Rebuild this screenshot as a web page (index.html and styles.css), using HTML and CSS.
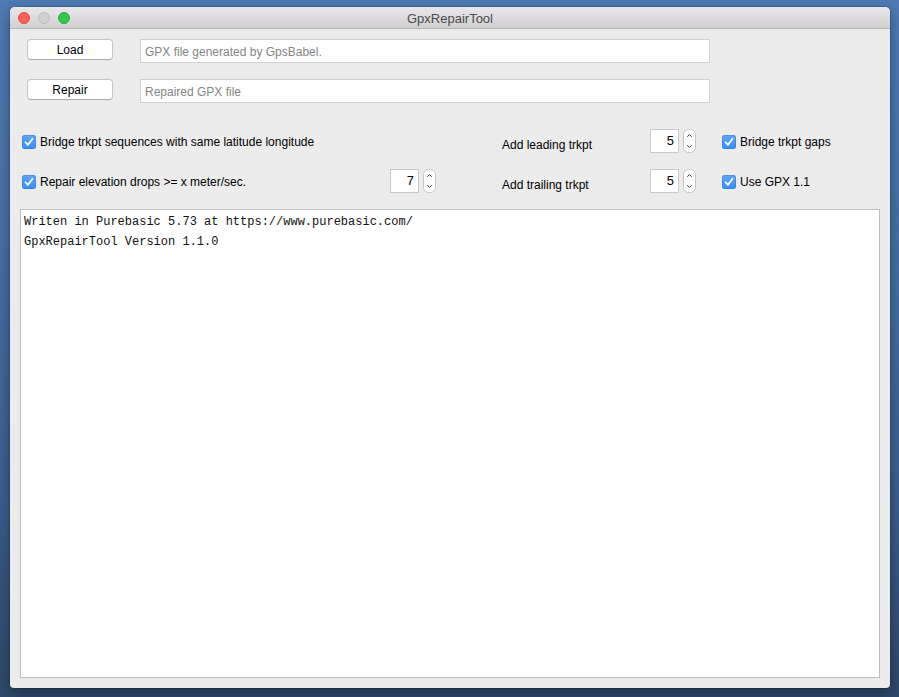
FILE: index.html
```html
<!DOCTYPE html>
<html>
<head>
<meta charset="utf-8">
<title>GpxRepairTool</title>
<link rel="stylesheet" href="styles.css">
</head>
<body>
<div class="window">
  <div class="titlebar">
    <div class="lights">
      <span class="light red"></span>
      <span class="light gray"></span>
      <span class="light green"></span>
    </div>
    <div class="title">GpxRepairTool</div>
    <div></div>
  </div>
  <div class="content">
    <div class="filerow">
      <button class="btn">Load</button>
      <div class="field">GPX file generated by GpsBabel.</div>
    </div>
    <div class="filerow second">
      <button class="btn">Repair</button>
      <div class="field">Repaired GPX file</div>
    </div>

    <div class="opts">
      <label class="check"><span class="box"><svg viewBox="0 0 14 14" width="14" height="14"><path d="M3.6 7.3 L6 9.8 L10.5 3.8" fill="none" stroke="#fff" stroke-width="1.7" stroke-linecap="round" stroke-linejoin="round"/></svg></span>Bridge trkpt sequences with same latitude longitude</label>
      <div></div>
      <div></div>
      <div class="lbl">Add leading trkpt</div>
      <div class="spin"><div class="num">5</div><svg class="step" viewBox="0 0 13 24" width="13" height="24"><rect x="0.5" y="0.5" width="12" height="23" rx="5" fill="#fff" stroke="#c4c4c4"/><path d="M4.3 7.8 L6.5 5.6 L8.7 7.8 M4.3 16.2 L6.5 18.4 L8.7 16.2" fill="none" stroke="#3a3a3a" stroke-width="1"/></svg></div>
      <div></div>
      <label class="check"><span class="box"><svg viewBox="0 0 14 14" width="14" height="14"><path d="M3.6 7.3 L6 9.8 L10.5 3.8" fill="none" stroke="#fff" stroke-width="1.7" stroke-linecap="round" stroke-linejoin="round"/></svg></span>Bridge trkpt gaps</label>
    </div>

    <div class="opts second">
      <label class="check"><span class="box"><svg viewBox="0 0 14 14" width="14" height="14"><path d="M3.6 7.3 L6 9.8 L10.5 3.8" fill="none" stroke="#fff" stroke-width="1.7" stroke-linecap="round" stroke-linejoin="round"/></svg></span>Repair elevation drops &gt;= x meter/sec.</label>
      <div class="spin"><div class="num">7</div><svg class="step" viewBox="0 0 13 24" width="13" height="24"><rect x="0.5" y="0.5" width="12" height="23" rx="5" fill="#fff" stroke="#c4c4c4"/><path d="M4.3 7.8 L6.5 5.6 L8.7 7.8 M4.3 16.2 L6.5 18.4 L8.7 16.2" fill="none" stroke="#3a3a3a" stroke-width="1"/></svg></div>
      <div></div>
      <div class="lbl">Add trailing trkpt</div>
      <div class="spin"><div class="num">5</div><svg class="step" viewBox="0 0 13 24" width="13" height="24"><rect x="0.5" y="0.5" width="12" height="23" rx="5" fill="#fff" stroke="#c4c4c4"/><path d="M4.3 7.8 L6.5 5.6 L8.7 7.8 M4.3 16.2 L6.5 18.4 L8.7 16.2" fill="none" stroke="#3a3a3a" stroke-width="1"/></svg></div>
      <div></div>
      <label class="check"><span class="box"><svg viewBox="0 0 14 14" width="14" height="14"><path d="M3.6 7.3 L6 9.8 L10.5 3.8" fill="none" stroke="#fff" stroke-width="1.7" stroke-linecap="round" stroke-linejoin="round"/></svg></span>Use GPX 1.1</label>
    </div>

    <div class="log">
      <div class="line">Writen in Purebasic 5.73 at https://www.purebasic.com/</div>
      <div class="line">GpxRepairTool Version 1.1.0</div>
    </div>
  </div>
</div>
</body>
</html>
```

FILE: styles.css
```css
html, body {
  margin: 0;
  padding: 0;
}
body {
  width: 899px;
  height: 697px;
  overflow: hidden;
  box-sizing: border-box;
  padding: 7px 0 0 10px;
  background: linear-gradient(180deg, #4e7bb5 0%, #4670a6 35%, #3b5f8f 70%, #2d4869 100%);
  font-family: "Liberation Sans", Arial, Helvetica, sans-serif;
  font-size: 12px;
  color: #000;
}
.window {
  width: 880px;
  height: 681px;
  background: #ececec;
  border-radius: 5px 5px 4px 4px;
  box-shadow: 0 0 0 1px rgba(0,0,0,0.12), 0 4px 14px rgba(0,0,0,0.35);
  display: flex;
  flex-direction: column;
  overflow: hidden;
}
.titlebar {
  height: 21px;
  flex: none;
  border-bottom: 1px solid #b3b3b3;
  background: linear-gradient(180deg, #e9e7e9 0%, #d2d0d2 100%);
  display: grid;
  grid-template-columns: 1fr auto 1fr;
  align-items: center;
}
.lights {
  display: flex;
  gap: 8px;
  padding-left: 8px;
  padding-top: 1px;
}
.light {
  width: 12px;
  height: 12px;
  border-radius: 50%;
  box-sizing: border-box;
}
.red { background: #fc5f57; border: 1px solid #e14640; }
.gray { background: #d0d0d0; border: 1px solid #bdbdbd; }
.green { background: #33c748; border: 1px solid #27a83a; }
.title {
  font-size: 13px;
  color: #4a4a4a;
  padding-top: 1px;
}
.content {
  flex: 1;
  display: flex;
  flex-direction: column;
  padding: 10px 10px 10px 10px;
  min-height: 0;
}
.filerow {
  display: flex;
  align-items: flex-start;
  height: 24px;
  padding-left: 7px;
}
.filerow.second {
  margin-top: 16px;
}
.btn {
  width: 86px;
  height: 21px;
  margin: 0;
  padding: 0;
  background: #fff;
  border: 1px solid #c6c6c6;
  border-bottom-color: #adadad;
  border-radius: 4px;
  font-family: "Liberation Sans", Arial, sans-serif;
  font-size: 12px;
  color: #000;
  box-shadow: 0 0.5px 0 rgba(0,0,0,0.05);
}
.field {
  margin-left: 27px;
  width: 570px;
  height: 24px;
  box-sizing: border-box;
  background: #fff;
  border: 1px solid #d1d1d1;
  color: #858585;
  padding: 1px 4px 0;
  line-height: 22px;
  font-size: 12px;
}
.opts {
  display: grid;
  grid-template-columns: 368px 46px 66px 148px 46px 26px auto;
  height: 24px;
  margin-top: 26px;
  padding-left: 2px;
  align-items: center;
}
.opts.second {
  margin-top: 16px;
}
.check {
  display: flex;
  align-items: center;
  gap: 4px;
  white-space: nowrap;
  padding-top: 2px;
}
.box {
  width: 14px;
  height: 14px;
  border-radius: 3px;
  background: linear-gradient(180deg, #5ca6fb 0%, #3a8ef6 100%);
  box-shadow: inset 0 0 0 0.5px rgba(20,90,200,0.5);
  display: inline-flex;
  flex: none;
}
.lbl {
  padding-top: 8px;
  white-space: nowrap;
}
.spin {
  display: flex;
  align-items: center;
  gap: 4px;
  height: 24px;
}
.num {
  width: 30px;
  height: 24px;
  box-sizing: border-box;
  background: #fff;
  border: 1px solid #c9c9c9;
  text-align: right;
  padding-right: 4px;
  line-height: 22px;
  font-size: 13px;
}
.step {
  display: block;
  flex: none;
}
.log {
  flex: 1;
  margin-top: 16px;
  background: #fff;
  border: 1px solid #bebebe;
  padding: 2px 3px;
  font-family: "Liberation Mono", "Courier New", monospace;
  font-size: 12px;
  line-height: 20px;
  color: #111;
}
.line {
  white-space: nowrap;
}
```
